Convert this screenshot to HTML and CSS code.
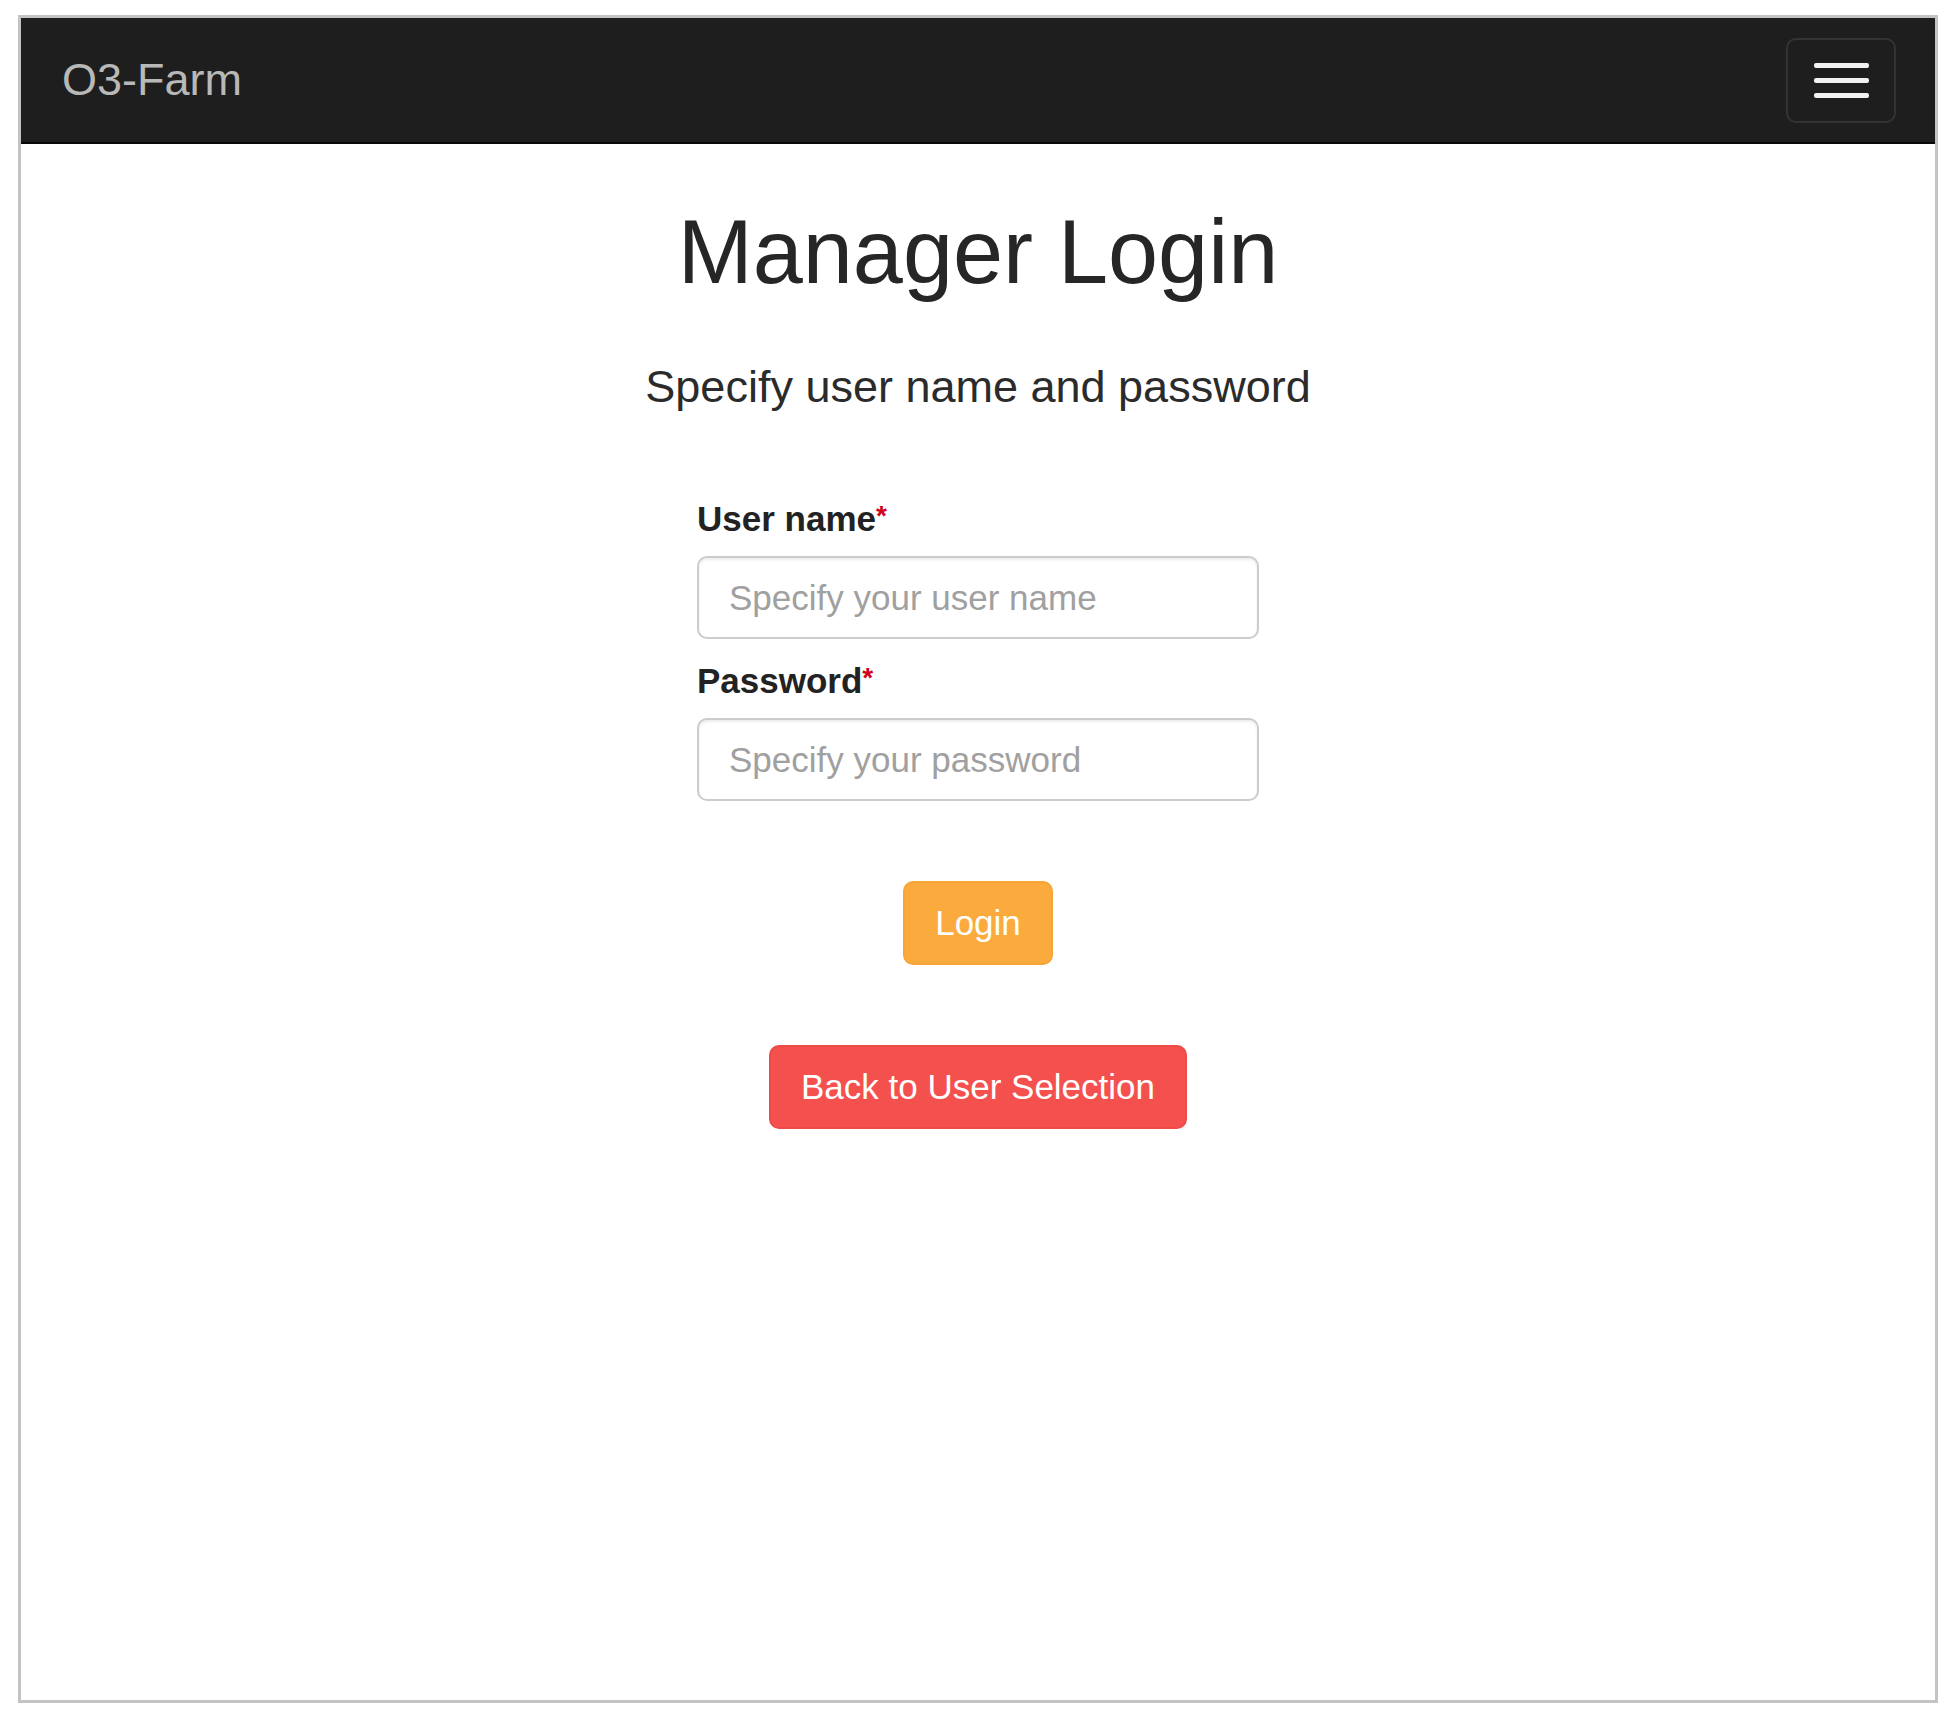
FILE: index.html
```html
<!DOCTYPE html>
<html lang="en">
<head>
<meta charset="utf-8">
<title>O3-Farm - Manager Login</title>
<link rel="stylesheet" href="styles.css">
</head>
<body>
<div class="frame">
  <nav class="navbar">
    <a class="brand" href="#">O3-Farm</a>
    <button class="toggle" type="button" aria-label="Toggle navigation">
      <span class="bar"></span>
      <span class="bar"></span>
      <span class="bar"></span>
    </button>
  </nav>
  <main class="content">
    <h1 class="title">Manager Login</h1>
    <h4 class="subtitle">Specify user name and password</h4>
    <form class="login-form">
      <label class="field-label" for="username">User name<span class="req">*</span></label>
      <input class="field-input" id="username" type="text" placeholder="Specify your user name">
      <label class="field-label second" for="password">Password<span class="req">*</span></label>
      <input class="field-input" id="password" type="password" placeholder="Specify your password">
      <div class="actions">
        <button class="btn btn-login" type="button">Login</button>
        <button class="btn btn-back" type="button">Back to User Selection</button>
      </div>
    </form>
  </main>
</div>
</body>
</html>
```
FILE: styles.css
```css
html, body {
  margin: 0;
  padding: 0;
  background: #ffffff;
  font-family: "Liberation Sans", Arial, sans-serif;
}

.frame {
  box-sizing: border-box;
  width: 1920px;
  height: 1688px;
  margin: 15px 0 0 18px;
  border: 3px solid #c3c3c3;
  background: #ffffff;
}

.navbar {
  box-sizing: border-box;
  height: 126px;
  background: #1e1e1e;
  border-bottom: 2px solid #080808;
  display: flex;
  align-items: center;
  justify-content: space-between;
  padding: 0 39px 0 41px;
}

.brand {
  color: #b8b8b8;
  font-size: 45px;
  line-height: 50px;
  text-decoration: none;
}

.toggle {
  box-sizing: border-box;
  width: 110px;
  height: 85px;
  background: transparent;
  border: 2.5px solid #333333;
  border-radius: 10px;
  display: flex;
  flex-direction: column;
  align-items: center;
  justify-content: center;
  gap: 10px;
  padding: 0;
  margin-top: 1px;
}

.bar {
  display: block;
  width: 55px;
  height: 5px;
  background: #f2f2f2;
  border-radius: 2px;
}

.content {
  display: flex;
  flex-direction: column;
  align-items: center;
}

.title {
  margin: 59px 0 0;
  font-size: 90px;
  line-height: 99px;
  font-weight: 400;
  color: #262626;
}

.subtitle {
  margin: 61px 0 0;
  font-size: 45px;
  line-height: 48px;
  font-weight: 400;
  color: #2b2b2b;
}

.login-form {
  width: 562px;
  margin-top: 80px;
}

.field-label {
  display: block;
  font-size: 35px;
  line-height: 50px;
  font-weight: 700;
  color: #222222;
  margin-bottom: 12px;
}

.field-label.second {
  margin-top: 14px;
}

.req {
  color: #d0021b;
  font-weight: 700;
  font-size: 28px;
  vertical-align: 6px;
}

.field-input {
  box-sizing: border-box;
  display: block;
  width: 100%;
  height: 83px;
  padding: 0 30px;
  border: 2.5px solid #cccccc;
  border-radius: 10px;
  box-shadow: inset 0 2px 3px rgba(0, 0, 0, 0.075);
  font-family: "Liberation Sans", Arial, sans-serif;
  font-size: 35px;
  color: #555555;
  background: #ffffff;
}

.field-input::placeholder {
  color: #a0a0a0;
}

.actions {
  display: flex;
  flex-direction: column;
  align-items: center;
  gap: 80px;
  margin-top: 80px;
}

.btn {
  box-sizing: border-box;
  height: 84px;
  padding: 0 30px;
  border: 2.5px solid transparent;
  border-radius: 10px;
  font-family: "Liberation Sans", Arial, sans-serif;
  font-size: 35px;
  color: #ffffff;
  cursor: pointer;
}

.btn-login {
  background: #fbab3d;
  border-color: #f7a537;
}

.btn-back {
  background: #f4504e;
  border-color: #ee4a48;
}
```
